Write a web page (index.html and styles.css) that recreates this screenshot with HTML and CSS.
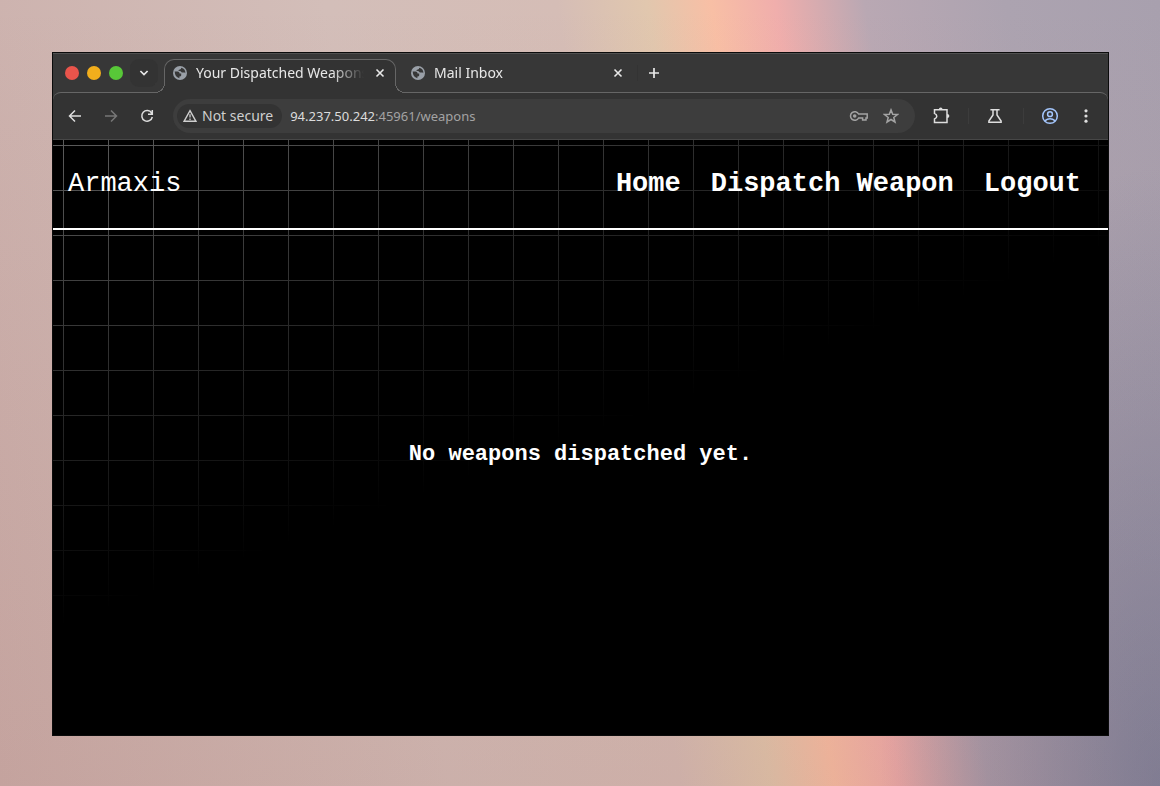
FILE: index.html
```html
<!DOCTYPE html>
<html lang="en">
<head>
<meta charset="utf-8">
<meta name="viewport" content="width=device-width, initial-scale=1">
<title>Your Dispatched Weapons</title>
<link rel="stylesheet" href="styles.css">
</head>
<body>
<svg width="0" height="0" class="defs" aria-hidden="true">
  <symbol id="globe" viewBox="0 0 14 14">
    <circle cx="7" cy="7" r="7" fill="#9aa0a8"/>
    <path d="M1.7 5.6 H4.6 Q6.6 5.8 6.6 7.6 H8.2 V9.4 Q8.2 10.4 6.4 10.6 V12.2 Q1.8 11.2 1.7 5.6Z M8.2 1.8 Q8.4 3.4 6.8 3.6 Q5.2 3.8 5.4 4.8 Q8.2 4.8 8.8 6.6 H11.6 Q12.2 7 12.3 7.6 Q12.8 3 8.2 1.8Z" fill="#373737"/>
  </symbol>
  <symbol id="close" viewBox="0 0 10 10"><path d="M1.5 1.5 L8.5 8.5 M8.5 1.5 L1.5 8.5" stroke="currentColor" stroke-width="1.6" fill="none"/></symbol>
</svg>
<div class="window">
  <div class="tabstrip">
    <div class="lights">
      <button class="light red" aria-label="Close window"></button>
      <button class="light amber" aria-label="Minimise window"></button>
      <button class="light green" aria-label="Maximise window"></button>
    </div>
    <button class="tab-search" aria-label="Search tabs"><svg width="10" height="10" viewBox="0 0 10 10"><path d="M1.4 3 L5 6.6 L8.6 3" stroke="currentColor" stroke-width="1.7" fill="none"/></svg></button>
    <div class="tab active">
      <svg class="favicon"><use href="#globe"/></svg>
      <span class="tab-title">Your Dispatched Weapons</span>
      <button class="tab-close" aria-label="Close tab"><svg width="10" height="10"><use href="#close"/></svg></button>
    </div>
    <div class="tab">
      <svg class="favicon"><use href="#globe"/></svg>
      <span class="tab-title">Mail Inbox</span>
      <button class="tab-close" aria-label="Close tab"><svg width="10" height="10"><use href="#close"/></svg></button>
    </div>
    <button class="new-tab" aria-label="New tab"><svg width="12" height="12" viewBox="0 0 12 12"><path d="M6 1 V11 M1 6 H11" stroke="currentColor" stroke-width="1.7"/></svg></button>
  </div>
  <div class="toolbar">
    <button class="tool" aria-label="Back"><svg width="16" height="16" viewBox="0 0 16 16"><path d="M14 8 H3 M8 2.5 L2.5 8 L8 13.5"/></svg></button>
    <button class="tool dim" aria-label="Forward"><svg width="16" height="16" viewBox="0 0 16 16"><path d="M2 8 H13 M8 2.5 L13.5 8 L8 13.5"/></svg></button>
    <button class="tool reload" aria-label="Reload"><svg width="16" height="16" viewBox="0 0 16 16"><path d="M12.6 5 A5.3 5.3 0 1 0 13.3 9 M13.3 2 V6.2 H9"/></svg></button>
    <div class="omnibox">
      <button class="security"><svg width="14" height="14" viewBox="0 0 14 14"><path d="M7 1.7 L13 12.3 H1Z" fill="none" stroke="currentColor" stroke-width="1.4"/><path d="M7 5.3 V8.6 M7 9.6 V11" stroke="currentColor" stroke-width="1.3"/></svg>Not secure</button>
      <a class="url" href="#"><span class="host">94.237.50.242</span>:45961/weapons</a>
      <button class="mini" aria-label="Passwords"><svg width="20" height="16" viewBox="0 0 20 16"><path d="M9.6 6 A4.3 4.3 0 1 0 9.6 10 H13.6 V12 H17 V10 H18.2 V6Z"/><circle cx="5.7" cy="8" r="1.8" class="solid"/></svg></button>
      <button class="mini star" aria-label="Bookmark"><svg width="16" height="16" viewBox="0 0 16 16"><path d="M8 1.9 L9.7 6.2 L14.4 6.5 L10.8 9.5 L12 14 L8 11.5 L4 14 L5.2 9.5 L1.6 6.5 L6.3 6.2Z"/></svg></button>
    </div>
    <button class="tool ext" aria-label="Extensions"><svg width="18" height="18" viewBox="0 0 18 18"><path d="M2.5 2.8 H15 V15.5 H2.5 V12 Q4.8 11 4.8 9.2 Q4.8 7.4 2.5 6.4Z"/><path class="solid" d="M6.8 3 Q6.8 0.6 8.7 0.6 Q10.6 0.6 10.6 3Z M15 7 Q17.4 7 17.4 9 Q17.4 11 15 11Z"/></svg></button>
    <span class="rule"></span>
    <button class="tool" aria-label="Experiments"><svg width="16" height="16" viewBox="0 0 16 16"><path d="M3.4 1.8 H12.6 M6 2 V7 L1.9 13 V14.2 H14.1 V13 L10 7 V2"/></svg></button>
    <span class="rule"></span>
    <button class="tool profile" aria-label="Profile"><svg width="18" height="18" viewBox="0 0 18 18"><circle cx="9" cy="9" r="7.3"/><circle cx="9" cy="7.2" r="2.4"/><path d="M3.8 13.8 Q9 9.6 14.2 13.8"/></svg></button>
    <button class="tool menu" aria-label="Menu"><svg width="16" height="16" viewBox="0 0 16 16"><g class="solid"><circle cx="8" cy="2.8" r="1.6"/><circle cx="8" cy="8" r="1.6"/><circle cx="8" cy="13.2" r="1.6"/></g></svg></button>
  </div>
  <div class="page">
    <header class="site-header">
      <span class="brand">Armaxis</span>
      <nav class="site-nav">
        <a href="#">Home</a>
        <a href="#">Dispatch Weapon</a>
        <a href="#">Logout</a>
      </nav>
    </header>
    <main class="content"><p>No weapons dispatched yet.</p></main>
  </div>
</div>
</body>
</html>
```
FILE: styles.css
```css
* { box-sizing: border-box; }

body {
  margin: 0;
  min-height: 100vh;
  display: flex;
  padding: 52px 51px 50px 52px;
  font: 14px/20px "Noto Sans", sans-serif;
  background:
    linear-gradient(to bottom, rgba(150, 80, 70, 0), rgba(150, 80, 70, 0.13)),
    radial-gradient(ellipse 280px 620px at 100% 100%, rgba(95, 110, 145, 0.6), rgba(95, 110, 145, 0)),
    linear-gradient(81deg, #cbafab 0%, #d3beb9 35%, #d5bdb6 53%, #e1c7ae 60%, #f8bfa5 65%, #f0aeac 70%, #b9a8b3 77%, #aca3b0 88%, #a8a0ae 100%);
}

button {
  border: 0;
  padding: 0;
  background: none;
  color: inherit;
  font: inherit;
  display: flex;
  align-items: center;
  justify-content: center;
  flex: none;
}

a { color: inherit; text-decoration: none; }
svg { display: block; flex: none; }
.defs { position: absolute; }

.window {
  flex: 1;
  min-width: 0;
  display: flex;
  flex-direction: column;
  border: 1px solid #0b0b0b;
  background: #373737;
  overflow: hidden;
}

.tabstrip {
  position: relative;
  z-index: 1;
  display: flex;
  align-items: stretch;
  height: 39px;
  padding: 5px 0 0 12px;
  border-top: 1px solid #505050;
  color: #e8e8e8;
}

.lights { display: flex; align-items: center; gap: 8px; padding-bottom: 5px; }
.light { width: 14px; height: 14px; border-radius: 50%; }
.red { background: #e9544b; }
.amber { background: #f2ae1c; }
.green { background: #58c838; }

.tab-search {
  width: 28px;
  height: 28px;
  margin: 0 6px 0 7px;
  border-radius: 9px;
  background: #333;
}

.tab {
  display: flex;
  align-items: center;
  width: 238px;
  padding: 0 10px 5px 15px;
}

.tab.active {
  position: relative;
  width: 232px;
  margin-bottom: -1px;
  padding: 0 9px 7px 8px;
  border: 1px solid #666;
  border-bottom: 0;
  border-radius: 10px 10px 0 0;
  background: #333;
}

.tab.active::before,
.tab.active::after {
  content: "";
  position: absolute;
  bottom: 0;
  width: 10px;
  height: 10px;
}
.tab.active::before { left: -10px; background: radial-gradient(circle at 0 0, #373737 9px, #666 9px, #666 10px, #333 10px); }
.tab.active::after { right: -10px; background: radial-gradient(circle at 100% 0, #373737 9px, #666 9px, #666 10px, #333 10px); }

.favicon { width: 14px; height: 14px; margin-right: 9px; }
.tab-title {
  flex: 1;
  min-width: 0;
  overflow: hidden;
  white-space: nowrap;
  mask-image: linear-gradient(to left, transparent, #000 32px);
}
.tab-close { margin-left: 10px; width: 12px; height: 20px; }
.new-tab {
  width: 32px;
  height: 16px;
  margin: 6px 0 0 3px;
  border-left: 1px solid #333;
}

.toolbar {
  display: flex;
  align-items: center;
  height: 48px;
  padding: 0 14px;
  border-top: 1px solid #666;
  border-bottom: 1px solid #474747;
  border-radius: 8px 8px 0 0;
  background: #333;
  color: #dedede;
}

.tool { width: 16px; height: 28px; margin-right: 20px; }
.tool svg, .mini svg { fill: none; stroke: currentColor; stroke-width: 1.5; }
.tool .solid, .mini .solid { fill: currentColor; stroke: none; }
.dim { color: #777; }
.reload { margin-right: 18px; }

.omnibox {
  flex: 1;
  min-width: 0;
  display: flex;
  align-items: center;
  height: 34px;
  padding: 0 16px 0 4px;
  border-radius: 17px;
  background: #3d3d3d;
  color: #a3a3a3;
}

.security {
  height: 24px;
  gap: 5px;
  padding: 0 9px 0 6px;
  margin-right: 8px;
  border-radius: 12px;
  background: #333;
  color: #cfcfcf;
}

.url {
  flex: 1;
  min-width: 0;
  white-space: nowrap;
  overflow: hidden;
  font-size: 13px;
}
.host { color: #dcdcdc; }
.star { margin-left: 14px; }

.ext { margin: 0 19px 0 18px; }
.rule { width: 1px; height: 16px; background: #3c3c3c; margin-right: 18px; }
.profile { color: #a3c5fb; }
.menu { margin-right: 0; }

.page {
  position: relative;
  isolation: isolate;
  flex: 1;
  display: flex;
  flex-direction: column;
  background: #000;
  color: #fff;
  font-family: "Liberation Mono", monospace;
  font-weight: 700;
}

.page::before {
  content: "";
  position: absolute;
  inset: 0;
  z-index: -1;
  background:
    linear-gradient(to right, #5c5c5c 1px, transparent 1px) 10px 5px / 45px 45px,
    linear-gradient(to bottom, #5c5c5c 1px, transparent 1px) 10px 5px / 45px 45px;
  mask-image: linear-gradient(160deg, #000, transparent 50%);
}

.site-header {
  display: flex;
  align-items: center;
  justify-content: space-between;
  height: 90px;
  padding: 0 27px 0 15px;
  border-bottom: 2px solid #fff;
  font-size: 27px;
  line-height: 32px;
}

.brand { font-weight: 400; }
.site-nav { display: flex; gap: 30px; white-space: nowrap; }

.content {
  flex: 1;
  display: flex;
  align-items: center;
  justify-content: center;
  padding-bottom: 56px;
  font-size: 22px;
  line-height: 28px;
}
.content p { margin: 0; }
```
